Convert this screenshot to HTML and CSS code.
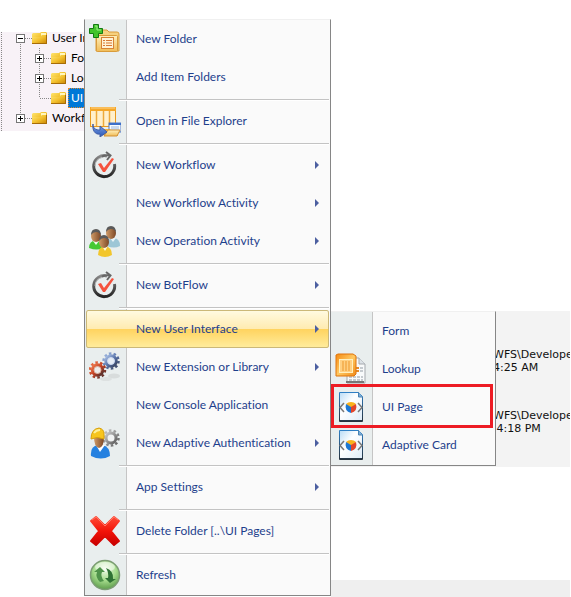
FILE: index.html
```html
<!DOCTYPE html>
<html lang="en">
<head>
  <meta charset="UTF-8">
  <meta name="viewport" content="width=device-width, initial-scale=1">
  <title>User Interface</title>
  <link rel="stylesheet" href="styles.css">
</head>
<body>
  <!-- Icon definitions -->
  <svg class="sprite" aria-hidden="true">
    <defs>
      <linearGradient id="gold" x1="0" y1="0" x2="0" y2="1"><stop offset="0" stop-color="#fff0bd"/><stop offset="1" stop-color="#f0bc58"/></linearGradient>
      <linearGradient id="folderGold" x1="0" y1="0" x2="1" y2="1"><stop offset="0" stop-color="#ffe878"/><stop offset=".5" stop-color="#f3c02d"/><stop offset="1" stop-color="#c68000"/></linearGradient>
      <linearGradient id="orange" x1="0" y1="0" x2="1" y2="1"><stop offset="0" stop-color="#f58a10"/><stop offset=".5" stop-color="#ffc861"/><stop offset="1" stop-color="#f08a18"/></linearGradient>
      <linearGradient id="dark" x1="0" y1="0" x2="0" y2="1"><stop offset="0" stop-color="#888"/><stop offset="1" stop-color="#252525"/></linearGradient>
      <linearGradient id="red" x1="0" y1="0" x2="0" y2="1"><stop offset="0" stop-color="#ff4a35"/><stop offset=".5" stop-color="#f31408"/><stop offset="1" stop-color="#c80000"/></linearGradient>
      <linearGradient id="blue" x1="0" y1="0" x2="0" y2="1"><stop offset="0" stop-color="#7fa5ea"/><stop offset="1" stop-color="#2b57b5"/></linearGradient>
      <linearGradient id="page" x1="0" y1="0" x2="1" y2="1"><stop offset="0" stop-color="#b9dcf6"/><stop offset=".4" stop-color="#fff"/><stop offset="1" stop-color="#dcebf8"/></linearGradient>
      <linearGradient id="pageEdge" x1="0" y1="0" x2="0" y2="1"><stop offset="0" stop-color="#2f7fc4"/><stop offset="1" stop-color="#26323d"/></linearGradient>
      <linearGradient id="rust" x1="0" y1="0" x2="1" y2="1"><stop offset="0" stop-color="#ef7a4e"/><stop offset=".5" stop-color="#c24024"/><stop offset="1" stop-color="#4a3030"/></linearGradient>
      <linearGradient id="steel" x1="0" y1="0" x2="1" y2="1"><stop offset="0" stop-color="#a9c0e6"/><stop offset=".5" stop-color="#5a75ab"/><stop offset="1" stop-color="#37415c"/></linearGradient>
      <linearGradient id="grey" x1="0" y1="0" x2="1" y2="1"><stop offset="0" stop-color="#c9c9c9"/><stop offset="1" stop-color="#5d5d5d"/></linearGradient>
      <radialGradient id="ball" cx=".5" cy=".3" r=".7"><stop offset="0" stop-color="#f0fbe8"/><stop offset=".55" stop-color="#a5dc8c"/><stop offset="1" stop-color="#5e9d4c"/></radialGradient>
      <linearGradient id="face" x1="0" y1="0" x2="1" y2="0"><stop offset="0" stop-color="#d09b67"/><stop offset="1" stop-color="#7d4826"/></linearGradient>
    </defs>

    <symbol id="tree-folder" viewBox="0 0 16 14">
      <path d="M0 3 L1 2 H8 L9 1 H14 L15 2 V12 H0Z" fill="url(#folderGold)"/>
      <path d="M9 2 H14 V4 L9 5Z" fill="#fff6be"/>
      <path d="M0 13 V6 H8 L10 4 H15 V13Z" fill="url(#folderGold)"/>
      <path d="M0 12.500 H14.500 V4" fill="none" stroke="#a66c08"/>
    </symbol>

    <symbol id="new-folder" viewBox="0 0 32 32">
      <path d="M7 28 V9 Q7 7 9 7 H18 L20 9 H28 Q30 9 30 11 V28Z" fill="#f6d17f" stroke="#d99c3b"/>
      <rect x="7.500" y="12.500" width="21" height="16" rx="1" fill="url(#gold)" stroke="#d99c3b"/>
      <rect x="12.500" y="14.500" width="12" height="11" fill="#fff2d5" stroke="#d88335"/>
      <path d="M14 17.500h2m1 0h6M14 20h2m1 0h6M14 22.500h2m1 0h6" stroke="#d87935"/>
      <path d="M4.500 1.500h5v4h4v5h-4v4h-5v-4h-4v-5h4Z" fill="#43c42c" stroke="#137b13"/>
      <path d="M6 3h2v4h4" fill="none" stroke="#9bf184"/>
    </symbol>

    <symbol id="explorer" viewBox="0 0 32 32">
      <rect x="1.500" y="2.500" width="25" height="19" fill="#fff0cc" stroke="#e99a1d"/>
      <path d="M1 2h26v4H1Z" fill="#f5a728"/>
      <path d="M2 3h24" stroke="#ffd58b"/>
      <path d="M7.500 6v15M14.500 6v15M20.500 6v15" stroke="#edaa3b" stroke-width="1.500"/>
      <rect x="20" y="18" width="12" height="9" fill="#f7fbff" stroke="#5079c3"/>
      <path d="M20 19h12" stroke="#3d70ca" stroke-width="2"/>
      <path d="M22 22h8M22 24h8" stroke="#9bb7de"/>
      <path d="M15 31V24h6l2 2h6v5Z" fill="#e9ae4c"/>
      <path d="M15 31l4-6h12l-3 6Z" fill="url(#gold)" stroke="#d39235"/>
      <path d="M4 19c0 5 3 6 7 6v-4l7 6-7 5v-3C6 30 3 25 4 19Z" fill="url(#blue)" stroke="#405da6"/>
    </symbol>

    <symbol id="workflow" viewBox="0 0 32 32">
      <path d="M18 7A10.500 10.500 0 1 0 25.500 15" fill="none" stroke="url(#dark)" stroke-width="3"/>
      <path d="M13 7.500q4-2 8-1M17 3l4.500 3.500L18 11" fill="none" stroke="#666" stroke-width="2"/>
      <path d="M6 17A9 9 0 0 1 13 8.500" fill="none" stroke="#bbb"/>
      <path d="M9 15l3-1 3 5 8-10 2 1-9 13h-2Z" fill="#f5523d"/>
    </symbol>

    <symbol id="people" viewBox="0 0 32 32">
      <path d="M18 21q0-8 6-8 7 0 7 8-6 3-13 0Z" fill="#9dc6d6"/>
      <path d="M21 13l3 4 3-4Z" fill="#e9f4f8"/>
      <ellipse cx="22" cy="8" rx="5" ry="6" fill="url(#face)"/>
      <path d="M17 7q0-6 5-6 5 0 5 7-1-4-5-4-3 0-5 3Z" fill="#5a5a5a"/>
      <path d="M0 23q0-7 7-8 7 1 7 8-6 3-14 0Z" fill="#45c932"/>
      <path d="M4 16l3 4 3-4Z" fill="#efffe9"/>
      <ellipse cx="7" cy="11" rx="5" ry="6" fill="url(#face)"/>
      <path d="M2 10q0-6 5-6t5 7q-1-4-5-4-3 0-5 3Z" fill="#5a5a5a"/>
      <path d="M9 30q0-8 7-9 7 1 7 9-7 4-14 0Z" fill="#f2c62c"/>
      <path d="M13 21l3 5 3-5Z" fill="#fff8da"/>
      <ellipse cx="15" cy="17" rx="5" ry="6" fill="url(#face)"/>
      <path d="M10 16q0-6 5-6t5 7q-1-4-5-4-3 0-5 3Z" fill="#5a5a5a"/>
    </symbol>

    <symbol id="gears" viewBox="0 0 32 32">
      <ellipse cx="25" cy="25" rx="6" ry="2.500" fill="#d8dcdc"/>
      <ellipse cx="17" cy="28" rx="6" ry="2" fill="#dde1e1"/>
      <circle cx="22" cy="10" r="7.500" fill="none" stroke="url(#steel)" stroke-width="2.500" stroke-dasharray="2.500 2.210"/>
      <circle cx="22" cy="10" r="5" fill="none" stroke="url(#steel)" stroke-width="3.500"/>
      <circle cx="22" cy="10" r="3.500" fill="#e6edf5" stroke="#c9d7ef"/>
      <circle cx="8.500" cy="19" r="7.500" fill="none" stroke="url(#rust)" stroke-width="2.500" stroke-dasharray="2.500 2.210"/>
      <circle cx="8.500" cy="19" r="5" fill="none" stroke="url(#rust)" stroke-width="3.500"/>
      <circle cx="8.500" cy="19" r="3.500" fill="#eeeceb" stroke="#d9b4a4"/>
    </symbol>

    <symbol id="worker" viewBox="0 0 32 32">
      <circle cx="22" cy="11" r="7.500" fill="none" stroke="url(#grey)" stroke-width="2.500" stroke-dasharray="2.500 2.210"/>
      <circle cx="22" cy="11" r="5" fill="#f1f3f3" stroke="url(#grey)" stroke-width="3"/>
      <path d="M2 29q-1-10 7-11h5q7 2 7 11-9 5-19 0Z" fill="#2581e0"/>
      <path d="M7 18l4 7 5-7Z" fill="#fff"/>
      <path d="M5 10h10q0 10-5 11-5-1-5-11Z" fill="url(#face)"/>
      <path d="M2 12Q2 2 10 1q5 1 5 6v5q-7-3-13 0Z" fill="#f7c51d" stroke="#d8a00b"/>
      <path d="M5 6q2-3 6-3" fill="none" stroke="#fff09a" stroke-width="2"/>
    </symbol>

    <symbol id="delete" viewBox="0 0 32 32">
      <path d="M2 6l5-4 9 9 9-9 5 4-8 10 8 10-5 4-9-9-9 9-5-4 8-10Z" fill="url(#red)" stroke="url(#red)" stroke-width="2" stroke-linejoin="round"/>
      <path d="M3 5l4-3 9 9 9-9 4 3" fill="none" stroke="#ff7565"/>
    </symbol>

    <symbol id="refresh" viewBox="0 0 32 32">
      <circle cx="16" cy="16" r="14.500" fill="url(#ball)" stroke="#7c9c74" stroke-width="1.500"/>
      <ellipse cx="16" cy="8" rx="10" ry="5" fill="#fff" opacity=".5"/>
      <path d="M11 23q-5-5-3-10H5l6-5 5 5h-3q-2 4 2 9Z" fill="#4f934a"/>
      <path d="M17 9q8 3 7 11h3l-6 4-5-5h3q1-5-2-10Z" fill="#2f7234"/>
    </symbol>

    <symbol id="lookup" viewBox="0 0 32 32">
      <path d="M12 5h12l6 6v19H12Z" fill="#f8fafb" stroke="#a5a9ad"/>
      <path d="M24 5v6h6" fill="#dce2e7" stroke="#a5a9ad"/>
      <path d="M21 15h7M21 18h7M14 24h14M14 27h14" stroke="#929ba3" stroke-dasharray="3 1"/>
      <path d="M21 15h3M21 18h3" stroke="#e58a29" stroke-width="2"/>
      <path d="M11 29h18" stroke="#777" stroke-width="2"/>
      <path d="M1 2l2-1h15l3 2v18l-2 2H1Z" fill="url(#orange)" stroke="#df740c"/>
      <rect x="4.500" y="6.500" width="13" height="13" fill="#ffd082" stroke="#fff0bf"/>
      <path d="M8 8v10M11 8v10M14 8v10" stroke="#ed982d"/>
    </symbol>

    <symbol id="ui-page" viewBox="0 0 32 32">
      <path d="M4.500 1.500h19l4 4v25h-23Z" fill="url(#page)" stroke="url(#pageEdge)"/>
      <path d="M23.500 1v5h4" fill="#7cafd7" stroke="#4a83b4"/>
      <path d="M5 29.500h22" stroke="#283949"/>
      <path d="M9 12l-4 4.500 4 4.500M23 12l4 4.500-4 4.500" fill="none" stroke="#777" stroke-width="1.500"/>
      <path d="M11 13q2-2 5-2t5 2l-5 4Z" fill="#f9b21b"/>
      <path d="M11 13l5 3v6q-7-2-5-9Z" fill="#1d78d2"/>
      <path d="M21 13l-5 3v6q7-2 5-9Z" fill="#e3452b"/>
    </symbol>
  </svg>

  <main class="workspace">
    <!-- Folder tree -->
    <nav class="tree" aria-label="Folders">
      <ul>
        <li>
          <div class="node">
            <button class="toggle open" aria-label="Collapse User Interface"></button>
            <svg class="folder"><use href="#tree-folder"/></svg>
            <a href="#">User Interface</a>
          </div>
          <ul>
            <li>
              <div class="node">
                <button class="toggle" aria-label="Expand Forms"></button>
                <svg class="folder"><use href="#tree-folder"/></svg>
                <a href="#">Forms</a>
              </div>
            </li>
            <li>
              <div class="node">
                <button class="toggle" aria-label="Expand Lookups"></button>
                <svg class="folder"><use href="#tree-folder"/></svg>
                <a href="#">Lookups</a>
              </div>
            </li>
            <li>
              <div class="node leaf">
                <svg class="folder"><use href="#tree-folder"/></svg>
                <a href="#" class="selected">UI Pages</a>
              </div>
            </li>
          </ul>
        </li>
        <li>
          <div class="node">
            <button class="toggle" aria-label="Expand Workflows"></button>
            <svg class="folder"><use href="#tree-folder"/></svg>
            <a href="#">Workflows</a>
          </div>
        </li>
      </ul>
    </nav>

    <!-- Details -->
    <section class="details">
      <p>WFS\Developer<br>4:25 AM</p>
      <p>WFS\Developer<br>&nbsp;4:18 PM</p>
    </section>
  </main>
  <footer class="statusbar"></footer>

  <!-- Context menu -->
  <ul class="menu context-menu">
    <li><button><svg class="icon"><use href="#new-folder"/></svg><span>New Folder</span></button></li>
    <li><button><span>Add Item Folders</span></button></li>
    <li class="separator"></li>
    <li><button><svg class="icon"><use href="#explorer"/></svg><span>Open in File Explorer</span></button></li>
    <li class="separator"></li>
    <li><button class="more"><svg class="icon"><use href="#workflow"/></svg><span>New Workflow</span></button></li>
    <li><button class="more"><span>New Workflow Activity</span></button></li>
    <li><button class="more"><svg class="icon"><use href="#people"/></svg><span>New Operation Activity</span></button></li>
    <li class="separator"></li>
    <li><button class="more"><svg class="icon"><use href="#workflow"/></svg><span>New BotFlow</span></button></li>
    <li class="separator"></li>
    <li>
      <button class="more active"><span>New User Interface</span></button>
      <ul class="menu submenu">
        <li><button><span>Form</span></button></li>
        <li><button><svg class="icon"><use href="#lookup"/></svg><span>Lookup</span></button></li>
        <li class="marked"><button><svg class="icon"><use href="#ui-page"/></svg><span>UI Page</span></button></li>
        <li><button><svg class="icon"><use href="#ui-page"/></svg><span>Adaptive Card</span></button></li>
      </ul>
    </li>
    <li><button class="more"><svg class="icon"><use href="#gears"/></svg><span>New Extension or Library</span></button></li>
    <li><button><span>New Console Application</span></button></li>
    <li><button class="more"><svg class="icon"><use href="#worker"/></svg><span>New Adaptive Authentication</span></button></li>
    <li class="separator"></li>
    <li><button class="more"><span>App Settings</span></button></li>
    <li class="separator"></li>
    <li><button><svg class="icon"><use href="#delete"/></svg><span>Delete Folder [..\UI Pages]</span></button></li>
    <li class="separator"></li>
    <li><button><svg class="icon"><use href="#refresh"/></svg><span>Refresh</span></button></li>
  </ul>
</body>
</html>
```
FILE: styles.css
```css
* {
  margin: 0;
  padding: 0;
  box-sizing: border-box;
}
body {
  display: flex;
  flex-direction: column;
  min-height: 100vh;
  background: #fff;
  font-family: Lato, "Open Sans", sans-serif;
  font-size: 12px;
  font-variant-ligatures: none;
  overflow: hidden;
}
ul {
  list-style: none;
}
button {
  border: 0;
  background: none;
  font: inherit;
  font-variant-ligatures: none;
  color: inherit;
}
.sprite {
  position: absolute;
  width: 0;
  height: 0;
}

.workspace {
  flex: 1;
  display: grid;
  grid-template-columns: 85px 1fr;
  align-items: start;
}

/* Folder tree */
.tree {
  margin-top: 32px;
  height: 99px;
  overflow: hidden;
  background: repeating-linear-gradient(#888 0 1px, transparent 1px 2px) 1px 0 / 1px 100% no-repeat #f8f2f7;
}
.tree > ul {
  margin-top: -4px;
  padding-left: 16px;
  background: repeating-linear-gradient(#888 0 1px, transparent 1px 2px) 20px 10px / 1px 80px no-repeat;
}
.tree ul ul {
  padding-left: 19px;
  background: repeating-linear-gradient(#888 0 1px, transparent 1px 2px) 23px 0 / 1px 50px no-repeat;
}
.node {
  display: flex;
  align-items: center;
  height: 20px;
  white-space: nowrap;
  background: repeating-linear-gradient(90deg, #888 0 1px, transparent 1px 2px) 5px 10px / 11px 1px no-repeat;
}
.leaf {
  padding-left: 16px;
}
.toggle {
  flex: none;
  width: 9px;
  height: 9px;
  margin-right: 7px;
  border: 1px solid #777;
  background:
    linear-gradient(#000, #000) center / 5px 1px no-repeat,
    linear-gradient(#000, #000) center / 1px 5px no-repeat,
    #fff;
}
.toggle.open {
  background:
    linear-gradient(#000, #000) center / 5px 1px no-repeat,
    #fff;
}
.folder {
  flex: none;
  width: 16px;
  height: 14px;
}
.tree a {
  padding: 0 2px;
  margin-left: 1px;
  line-height: 18px;
  border: 1px solid transparent;
  color: #000;
  text-decoration: none;
}
.tree a.selected {
  background: #0078d7;
  border: 1px dotted #e08a30;
  color: #fff;
}

/* Details pane behind the menus */
.details {
  margin: 311px 1px 0 0;
  padding: 37px 0 32px 408px;
  background: #f3f3f3;
  font: 11px/13px "DejaVu Sans", Verdana, sans-serif;
  color: #111;
  overflow: hidden;
  white-space: nowrap;
}
.details p + p {
  margin-top: 35px;
}
.statusbar {
  height: 17px;
  margin: 0 1px 0 331px;
  background: #efefef;
}

/* Menus */
.menu {
  position: absolute;
  border: 1px solid #868686;
  border-top-color: #f0f0f0;
  background: linear-gradient(90deg, #e9eeee 41px, #c5c5c5 41px 42px, #fafafa 42px);
  color: #1e3f8c;
}
.context-menu {
  top: 19px;
  left: 84px;
  width: 247px;
  padding-bottom: 1px;
}
.submenu {
  top: 1px;
  left: calc(100% + 1px);
  width: 165px;
  padding-bottom: 1px;
  border-left: 0;
}
.menu li {
  position: relative;
}
.menu button {
  display: grid;
  grid-template-columns: 47px 1fr auto;
  align-items: center;
  width: 100%;
  height: 38px;
  padding: 0 11px 0 4px;
  text-align: left;
  white-space: nowrap;
}
.menu button span {
  grid-column: 2;
  padding-bottom: 2px;
}
.icon {
  width: 32px;
  height: 32px;
}
.more::after {
  content: "";
  border: 4px solid transparent;
  border-left-color: #4c5fa0;
  border-right: 0;
}
.menu .active {
  border: solid transparent;
  border-width: 0 1px;
  padding: 0 10px 0 3px;
  border-radius: 3px;
  background: linear-gradient(#fffbe3, #ffebb0 50%, #ffd35e 50%, #ffed9f) padding-box;
  box-shadow: inset 0 0 0 1px #cbb878;
}
.menu .separator {
  height: 6px;
  margin: 0 1px 0 34px;
  background: linear-gradient(transparent 3px, #c3c3c3 3px 4px, #fff 4px 5px, transparent 5px);
}

/* Red frame around the marked item */
.marked::after {
  content: "";
  position: absolute;
  inset: -4px 2px -2px 0;
  border: 3px solid #ed1c24;
  pointer-events: none;
}
```
